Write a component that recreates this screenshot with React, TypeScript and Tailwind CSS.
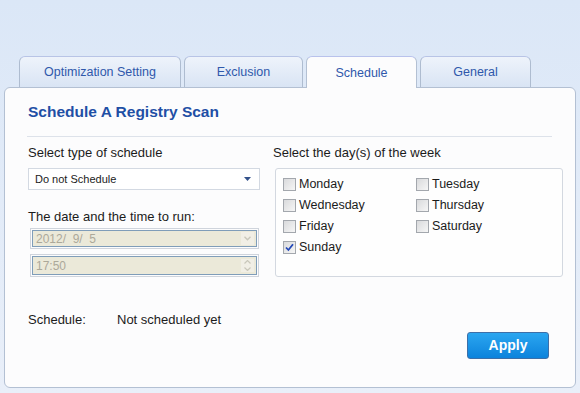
import React from 'react';

const tabs = [
  { label: 'Optimization Setting', width: 'w-[162px]', active: false },
  { label: 'Exclusion', width: 'w-[119px]', active: false },
  { label: 'Schedule', width: 'w-[111px]', active: true },
  { label: 'General', width: 'w-[111px]', active: false },
];

const days = ['Monday', 'Tuesday', 'Wednesday', 'Thursday', 'Friday', 'Saturday', 'Sunday'];

function Checkbox({ checked, label }: { checked?: boolean; label: string }) {
  return (
    <label className="flex h-[21px] items-center gap-[3px] text-[12.5px] text-[#1b1b1b]">
      <span className="flex h-[13px] w-[13px] items-center justify-center border border-[#a3a7ad] bg-gradient-to-br from-[#d9dadc] to-[#f6f6f6]">
        {checked && (
          <svg width="9" height="9" viewBox="0 0 9 9">
            <path d="M1 4.5 L3.4 7 L8 1.2" fill="none" stroke="#2348b8" strokeWidth="1.8" />
          </svg>
        )}
      </span>
      <span>{label}</span>
    </label>
  );
}

function Tab({ label, width, active }: { label: string; width: string; active: boolean }) {
  return (
    <div
      className={`${width} flex items-center justify-center rounded-t-[6px] border border-b-0 text-[12.5px] text-[#2f58ab] ${
        active
          ? 'relative z-10 -mb-px h-[32px] border-[#b3c0d3] border-t-[#b9c2ec] bg-[#fcfcfd] pt-px'
          : 'h-[31px] border-[#aebcd0] border-t-[#b8c4e6] bg-gradient-to-b from-[#eef3fb] to-[#d9e4f4] pt-px'
      }`}
    >
      {label}
    </div>
  );
}

export default function App() {
  return (
    <div
      className="h-[393px] w-[580px] overflow-hidden bg-gradient-to-b from-[#dbe7f7] to-[#e9eff9] px-[4px] pt-[56px]"
      style={{ fontFamily: '"Liberation Sans", Arial, sans-serif' }}
    >
      <div className="ml-[15px] flex items-end gap-[3px]">
        {tabs.map((t) => (
          <Tab key={t.label} {...t} />
        ))}
      </div>

      <div className="h-[301px] w-[572px] rounded-[6px] border border-[#b3c0d3] bg-[#fcfcfd] pl-[23px] pt-[14px]">
        <h1 className="h-[20px] text-[15.5px] font-bold leading-[20px] text-[#1f4fa5]">Schedule A Registry Scan</h1>
        <div className="ml-[-1px] mt-[14px] h-px w-[525px] bg-[#dde2ea]" />

        <div className="mt-[8px] flex gap-[13px]">
          <div className="w-[232px]">
            <div className="h-[16px] text-[13px] leading-[16px] text-[#1b1b1b]">Select type of schedule</div>
            <div className="mt-[7px] flex h-[22px] items-center justify-between border border-[#d3d9e2] bg-white pl-[6px] pr-[8px] text-[11px] text-[#1b1b1b]">
              <span>Do not Schedule</span>
              <svg width="7" height="4" viewBox="0 0 7 4">
                <path d="M0 0 H7 L3.5 4 Z" fill="#33518a" />
              </svg>
            </div>

            <div className="mt-[19px] h-[16px] text-[13px] leading-[16px] text-[#1b1b1b]">The date and the time to run:</div>
            <div className="ml-[2px] mt-[3px] h-[21px] w-[229px] border border-[#cfd4dc] p-px">
              <div className="flex h-full items-center justify-between border border-[#7f9db9] bg-[#ebe9d9] pl-[3px] pr-[2px] text-[12px] text-[#aca899]">
                <span>2012/&nbsp; 9/&nbsp; 5</span>
                <span className="flex h-[13px] w-[13px] items-center justify-center bg-[#f1efe6]">
                  <svg width="7" height="5" viewBox="0 0 7 5">
                    <path d="M0.5 0.8 L3.5 3.8 L6.5 0.8" fill="none" stroke="#c9c7ba" strokeWidth="1.4" />
                  </svg>
                </span>
              </div>
            </div>
            <div className="ml-[2px] mt-[5px] h-[23px] w-[229px] border border-[#cfd4dc] p-px">
              <div className="flex h-full items-center justify-between border border-[#7f9db9] bg-[#ebe9d9] pl-[3px] pr-[2px] text-[12px] text-[#aca899]">
                <span>17:50</span>
                <span className="flex w-[13px] flex-col items-center gap-[3px] bg-[#f1efe6] py-px">
                  <svg width="7" height="4" viewBox="0 0 7 4">
                    <path d="M0.5 3.5 L3.5 0.5 L6.5 3.5" fill="none" stroke="#c9c7ba" strokeWidth="1.2" />
                  </svg>
                  <svg width="7" height="4" viewBox="0 0 7 4">
                    <path d="M0.5 0.5 L3.5 3.5 L6.5 0.5" fill="none" stroke="#c9c7ba" strokeWidth="1.2" />
                  </svg>
                </span>
              </div>
            </div>
          </div>

          <div>
            <div className="h-[16px] text-[13px] leading-[16px] text-[#1b1b1b]">Select the day(s) of the week</div>
            <div className="ml-[2px] mt-[7px] h-[109px] w-[288px] rounded-[3px] border border-[#d3d8e0] bg-[#fefefe] pl-[7px] pt-[5px]">
              <div className="grid grid-cols-[133px_1fr]">
                {days.map((d) => (
                  <Checkbox key={d} label={d} checked={d === 'Sunday'} />
                ))}
              </div>
            </div>
          </div>
        </div>

        <div className="mt-[35px] flex h-[16px] items-center text-[13px] leading-[16px] text-[#1b1b1b]">
          <span className="w-[89px]">Schedule:</span>
          <span>Not scheduled yet</span>
        </div>

        <div className="mt-[4px] flex justify-end pr-[26px]">
          <button
            type="button"
            className="h-[27px] w-[82px] rounded-[3px] border border-[#3d6fa8] bg-gradient-to-b from-[#2aa6f0] to-[#0b83dc] text-[14px] font-bold text-white"
          >
            Apply
          </button>
        </div>
      </div>
    </div>
  );
}
